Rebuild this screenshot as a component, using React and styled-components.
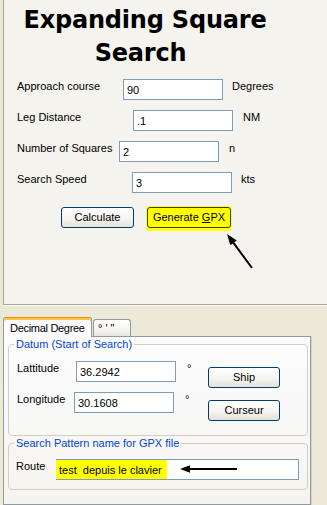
import React from 'react';
import styled, { createGlobalStyle, css } from 'styled-components';

const Global = createGlobalStyle`
  html, body { margin: 0; padding: 0; background: #ece9d8; }
  body {
    font-family: "Liberation Sans", Arial, sans-serif;
    font-size: 11px;
    color: #000;
  }
  * { box-sizing: border-box; }
`;

const Window = styled.div`
  width: 327px;
  height: 505px;
  overflow: hidden;
  display: flex;
  flex-direction: column;
  background: #ece9d8;
`;

const TopPanel = styled.section`
  position: relative;
  flex: none;
  height: 305px;
  margin-left: 3px;
  padding-top: 4px;
  background: #f4f3ee;
  border-left: 1px solid #a9a89f;
  border-bottom: 1px solid #a9a89f;
  box-shadow: 0 1px 0 #fbfaf6;
`;

const Title = styled.h1`
  margin: 0;
  width: 282px;
  font-family: "DejaVu Sans", Verdana, sans-serif;
  font-weight: bold;
  font-size: 24px;
  line-height: 33px;
  text-align: center;
  white-space: nowrap;
  letter-spacing: -0.2px;
`;

const TitleLine = styled.span`
  display: block;
  padding-right: ${p => p.$shift || 0}px;
`;

const Form = styled.div`
  display: flex;
  flex-direction: column;
  gap: 10px;
  padding: 9px 0 0 13px;
`;

const FieldRow = styled.div`
  display: flex;
  align-items: flex-start;
  padding-right: ${p => p.$pr || 0}px;
`;

const Label = styled.span`
  flex: none;
  width: ${p => p.$w}px;
  line-height: 13px;
  padding-top: 1px;
  white-space: nowrap;
`;

const TextField = styled.div`
  position: relative;
  flex: none;
  display: flex;
  align-items: center;
  width: ${p => p.$w || 100}px;
  height: 21px;
  padding: 2px ${p => (p.$flush ? 0 : 3)}px 0;
  border: 1px solid #7f9db9;
  background: #fff;
  line-height: 13px;
  white-space: pre;
`;

const Unit = styled.span`
  flex: none;
  margin-left: ${p => p.$ml || 9}px;
  line-height: 13px;
  padding-top: 1px;
`;

const ButtonRow = styled.div`
  display: flex;
  gap: 13px;
  padding: 14px 0 0 57px;
`;

const Button = styled.button`
  flex: none;
  width: ${p => p.$w || 72}px;
  height: 21px;
  margin-top: ${p => p.$mt || 0}px;
  margin-left: ${p => (p.$push ? 'auto' : '0')};
  padding: 0;
  border: 1px solid #003c74;
  border-radius: 3px;
  background: linear-gradient(#ffffff, #f5f4f0 55%, #e4e2d8);
  font-family: "Liberation Sans", Arial, sans-serif;
  font-weight: 400;
  font-size: 11px;
  color: #000;
  line-height: 13px;
  ${p => p.$marked && css`
    background: #ffff00;
    border-color: #3d3d0a;
    box-shadow: 0 0 0 1px #ffff1a, 0 2px 0 1px #ffff1a;
  `}
  u { text-decoration: underline; text-underline-offset: 1px; }
`;

const Annotation = styled.svg`
  position: absolute;
  left: ${p => p.$x}px;
  top: ${p => p.$y}px;
  overflow: visible;
  pointer-events: none;
`;

const TabArea = styled.div`
  flex: 1;
  min-height: 0;
  display: flex;
  flex-direction: column;
  width: 308px;
  margin: 12px 0 0 3px;
`;

const TabStrip = styled.div`
  display: flex;
  align-items: flex-end;
  height: 19px;
  flex: none;
`;

const Tab = styled.div`
  position: relative;
  flex: none;
  display: flex;
  align-items: center;
  width: ${p => p.$w}px;
  padding-left: ${p => p.$pl}px;
  border: 1px solid #919b9c;
  border-bottom: none;
  border-radius: 3px 3px 0 0;
  line-height: 13px;
  white-space: pre;
  letter-spacing: ${p => (p.$active ? '-0.3px' : '0')};
  ${p => (p.$active
    ? css`
      z-index: 1;
      height: 20px;
      margin-bottom: -1px;
      padding-top: 1px;
      border-top: 1px solid #e68b2c;
      background: #fcfcfe;
      box-shadow: inset 0 2px 0 #ffc73c;
    `
    : css`
      height: 17px;
      margin-left: 1px;
      background: linear-gradient(#ffffff, #f4f3ef 70%, #e6e5de);
    `)}
`;

const TabPanel = styled.div`
  flex: 1;
  min-height: 0;
  display: flex;
  flex-direction: column;
  border: 1px solid #919b9c;
  background: linear-gradient(#fcfcfe, #f5f4f0);
  box-shadow: 1px 0 0 #d6d3c5;
`;

const Group = styled.fieldset`
  min-width: 0;
  width: 300px;
  margin: 1px 0 0 4px;
  padding: 0;
  border: 1px solid #d0d0bf;
  border-radius: 4px;
`;

const Legend = styled.legend`
  margin-left: 5px;
  padding: 0 2px;
  color: #0046d5;
  font-size: 11px;
  line-height: 13px;
`;

const GroupBody = styled.div`
  display: flex;
  flex-direction: column;
  gap: 4px;
  padding: ${p => p.$pt}px 0 ${p => p.$pb}px ${p => p.$pl || 8}px;
`;

const Marked = styled.span`
  display: block;
  height: 19px;
  margin: -2px 0 0 -1px;
  padding: 4px 5px 0 3px;
  background: #ffff00;
  line-height: 13px;
`;

function ArrowUp() {
  return (
    <Annotation $x={216} $y={228} width="40" height="45" viewBox="0 0 40 45">
      <line x1="32" y1="40" x2="13.5" y2="14.9" stroke="#000" strokeWidth="2" />
      <polygon points="7,6 16.8,12.5 10.3,17.3" fill="#000" />
    </Annotation>
  );
}

function ArrowLeft() {
  return (
    <Annotation $x={123} $y={4} width="58" height="10" viewBox="0 0 58 10">
      <line x1="57" y1="5" x2="9" y2="5" stroke="#000" strokeWidth="2" />
      <polygon points="0,5 10,1.3 10,8.7" fill="#000" />
    </Annotation>
  );
}

export default function App() {
  return (
    <>
      <Global />
      <Window>
        <TopPanel>
          <Title>
            <TitleLine>Expanding Square</TitleLine>
            <TitleLine $shift={9}>Search</TitleLine>
          </Title>
          <Form>
            <FieldRow>
              <Label $w={106}>Approach course</Label>
              <TextField>90</TextField>
              <Unit>Degrees</Unit>
            </FieldRow>
            <FieldRow>
              <Label $w={116}>Leg Distance</Label>
              <TextField>.1</TextField>
              <Unit $ml={10}>NM</Unit>
            </FieldRow>
            <FieldRow>
              <Label $w={102}>Number of Squares</Label>
              <TextField>2</TextField>
              <Unit $ml={10}>n</Unit>
            </FieldRow>
            <FieldRow>
              <Label $w={115}>Search Speed</Label>
              <TextField>3</TextField>
              <Unit>kts</Unit>
            </FieldRow>
          </Form>
          <ButtonRow>
            <Button $w={73}>Calculate</Button>
            <Button $w={84} $marked>Generate <u>G</u>PX</Button>
          </ButtonRow>
          <ArrowUp />
        </TopPanel>

        <TabArea>
          <TabStrip>
            <Tab $active $w={89} $pl={6}>Decimal Degree</Tab>
            <Tab $w={38} $pl={4}>{'° \' "'}</Tab>
          </TabStrip>
          <TabPanel>
            <Group>
              <Legend>Datum (Start of Search)</Legend>
              <GroupBody $pt={10} $pb={14}>
                <FieldRow $pr={27}>
                  <Label $w={59}>Lattitude</Label>
                  <TextField>36.2942</TextField>
                  <Unit $ml={11}>°</Unit>
                  <Button $push $mt={6}>Ship</Button>
                </FieldRow>
                <FieldRow $pr={27}>
                  <Label $w={57}>Longitude</Label>
                  <TextField>30.1608</TextField>
                  <Unit $ml={11}>°</Unit>
                  <Button $push $mt={8}>Curseur</Button>
                </FieldRow>
              </GroupBody>
            </Group>
            <Group>
              <Legend>Search Pattern name for GPX file</Legend>
              <GroupBody $pt={9} $pb={9} $pl={7}>
                <FieldRow>
                  <Label $w={40}>Route</Label>
                  <TextField $w={243} $flush>
                    <Marked>test  depuis le clavier</Marked>
                    <ArrowLeft />
                  </TextField>
                </FieldRow>
              </GroupBody>
            </Group>
          </TabPanel>
        </TabArea>
      </Window>
    </>
  );
}
